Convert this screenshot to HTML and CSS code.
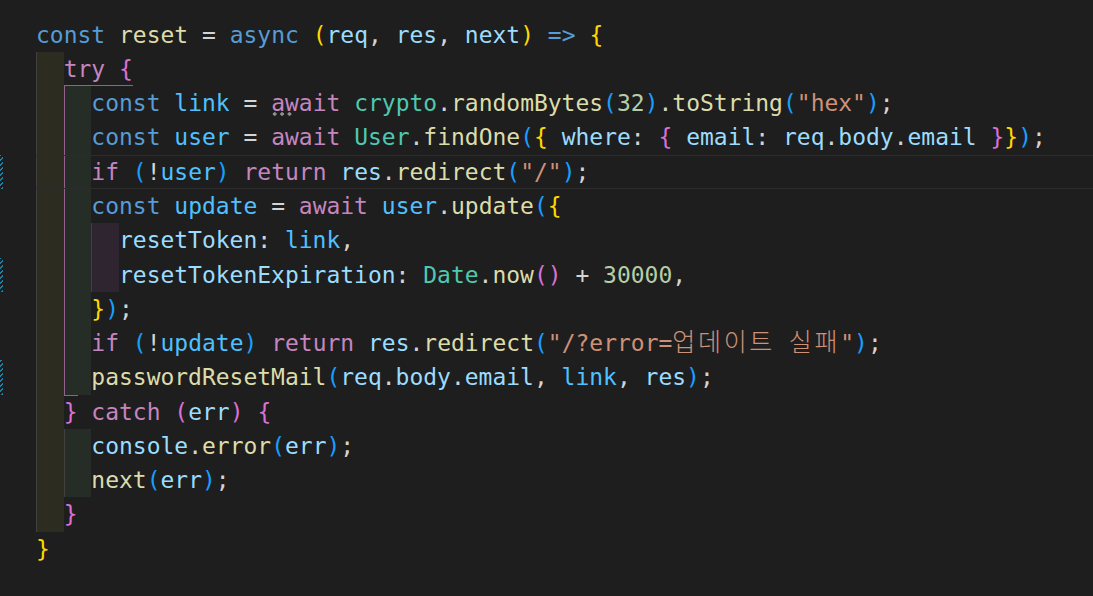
FILE: index.html
```html
<!DOCTYPE html>
<html lang="ko">
<head>
<meta charset="utf-8">
<title>reset.js</title>
<link rel="stylesheet" href="styles.css">
</head>
<body>
<div class="editor">
  <div class="row"><div class="gut"></div><div class="body"><span class="code"><span class="k">const</span> <span class="f">reset</span> = <span class="k">async</span> <span class="b1">(</span><span class="v">req</span>, <span class="v">res</span>, <span class="v">next</span><span class="b1">)</span> <span class="k">=&gt;</span> <span class="b1">{</span></span></div></div>
  <div class="row"><div class="gut"></div><div class="body"><span class="ind i1"></span><span class="code open-guide"><span class="c">try</span> <span class="b2">{</span></span></div></div>
  <div class="row"><div class="gut"></div><div class="body"><span class="ind i1"></span><span class="ind i2 pg"></span><span class="code"><span class="k">const</span> <span class="cv">link</span> = <span class="c"><span class="hint">aw</span>ait</span> <span class="t">crypto</span>.<span class="f">randomBytes</span><span class="b3">(</span><span class="n">32</span><span class="b3">)</span>.<span class="f">toString</span><span class="b3">(</span><span class="s">"hex"</span><span class="b3">)</span>;</span></div></div>
  <div class="row"><div class="gut"></div><div class="body"><span class="ind i1"></span><span class="ind i2 pg"></span><span class="code"><span class="k">const</span> <span class="cv">user</span> = <span class="c">await</span> <span class="t">User</span>.<span class="f">findOne</span><span class="b3">(</span><span class="b1">{</span> <span class="v">where</span>: <span class="b2">{</span> <span class="v">email</span>: <span class="v">req</span>.<span class="v">body</span>.<span class="v">email</span> <span class="b2">}</span><span class="b1">}</span><span class="b3">)</span>;</span></div></div>
  <div class="row"><div class="gut mod"></div><div class="body current"><span class="ind i1"></span><span class="ind i2 pg"></span><span class="code"><span class="c">if</span> <span class="b3">(</span>!<span class="cv">user</span><span class="b3">)</span> <span class="c">return</span> <span class="v">res</span>.<span class="f">redirect</span><span class="b3">(</span><span class="s">"/"</span><span class="b3">)</span>;</span></div></div>
  <div class="row"><div class="gut"></div><div class="body"><span class="ind i1"></span><span class="ind i2 pg"></span><span class="code"><span class="k">const</span> <span class="cv">update</span> = <span class="c">await</span> <span class="cv">user</span>.<span class="f">update</span><span class="b3">(</span><span class="b1">{</span></span></div></div>
  <div class="row"><div class="gut"></div><div class="body"><span class="ind i1"></span><span class="ind i2 pg"></span><span class="ind i3"></span><span class="code"><span class="v">resetToken</span>: <span class="cv">link</span>,</span></div></div>
  <div class="row"><div class="gut mod"></div><div class="body"><span class="ind i1"></span><span class="ind i2 pg"></span><span class="ind i3"></span><span class="code"><span class="v">resetTokenExpiration</span>: <span class="t">Date</span>.<span class="f">now</span><span class="b2">()</span> + <span class="n">30000</span>,</span></div></div>
  <div class="row"><div class="gut"></div><div class="body"><span class="ind i1"></span><span class="ind i2 pg"></span><span class="code"><span class="b1">}</span><span class="b3">)</span>;</span></div></div>
  <div class="row"><div class="gut"></div><div class="body"><span class="ind i1"></span><span class="ind i2 pg"></span><span class="code"><span class="c">if</span> <span class="b3">(</span>!<span class="cv">update</span><span class="b3">)</span> <span class="c">return</span> <span class="v">res</span>.<span class="f">redirect</span><span class="b3">(</span><span class="s">"/?error=<span class="ko">업데이트</span> <span class="ko">실패</span>"</span><span class="b3">)</span>;</span></div></div>
  <div class="row"><div class="gut mod"></div><div class="body"><span class="ind i1"></span><span class="ind i2 pg"></span><span class="code"><span class="f">passwordResetMail</span><span class="b3">(</span><span class="v">req</span>.<span class="v">body</span>.<span class="v">email</span>, <span class="cv">link</span>, <span class="v">res</span><span class="b3">)</span>;</span></div></div>
  <div class="row"><div class="gut"></div><div class="body"><span class="ind i1"></span><span class="code"><span class="b2 close-guide">}</span> <span class="c">catch</span> <span class="b2">(</span><span class="v">err</span><span class="b2">)</span> <span class="b2">{</span></span></div></div>
  <div class="row"><div class="gut"></div><div class="body"><span class="ind i1"></span><span class="ind i2"></span><span class="code"><span class="v">console</span>.<span class="f">error</span><span class="b3">(</span><span class="v">err</span><span class="b3">)</span>;</span></div></div>
  <div class="row"><div class="gut"></div><div class="body"><span class="ind i1"></span><span class="ind i2"></span><span class="code"><span class="f">next</span><span class="b3">(</span><span class="v">err</span><span class="b3">)</span>;</span></div></div>
  <div class="row"><div class="gut"></div><div class="body"><span class="ind i1"></span><span class="code"><span class="b2">}</span></span></div></div>
  <div class="row"><div class="gut"></div><div class="body"><span class="code"><span class="b1">}</span></span></div></div>
</div>
</body>
</html>
```

FILE: styles.css
```css
html, body {
  margin: 0;
  padding: 0;
  background: #1e1e1e;
}

.editor {
  width: 1093px;
  height: 596px;
  box-sizing: border-box;
  padding-top: 17.7px;
  background: #1e1e1e;
  font-family: "DejaVu Sans Mono", "Noto Sans CJK KR", monospace;
  font-size: 22.98px;
  color: #d4d4d4;
  overflow: hidden;
}

.row {
  display: flex;
  height: 34.27px;
  line-height: 34.27px;
}

.gut {
  flex: none;
  width: 36px;
}

.gut.mod::before {
  content: "";
  display: block;
  width: 3px;
  height: 100%;
  background: repeating-linear-gradient(-45deg, #1b81a8 0 1.6px, transparent 1.6px 3.6px);
}

.body {
  flex: 1;
  display: flex;
  align-items: stretch;
  box-sizing: border-box;
}

.body.current {
  border-top: 1px solid #2c2c2c;
  border-bottom: 1px solid #2c2c2c;
  line-height: 32.27px;
}

.ind {
  flex: none;
  width: 27.67px;
  box-sizing: border-box;
  border-left: 1px solid #404040;
}

.i1 { background: #2d2c21; }
.i2 { background: #252d26; }
.i3 { background: #2e2530; }

.ind.pg { border-left-color: #93608f; }

.code {
  white-space: pre;
  flex: none;
}

.open-guide {
  box-sizing: border-box;
  border-bottom: 1px solid #93608f;
}

.close-guide {
  display: inline-block;
  vertical-align: top;
  box-sizing: border-box;
  border-top: 1px solid #93608f;
  line-height: 33.27px;
}

.hint {
  position: relative;
}

.hint::after {
  content: "";
  position: absolute;
  left: 0;
  bottom: 0.3px;
  width: 22px;
  height: 4px;
  background: radial-gradient(circle, #8f8f8f 1.5px, transparent 1.9px) 0 0 / 7.4px 4px repeat-x;
}

.ko {
  font-family: "Noto Sans CJK KR", "DejaVu Sans Mono", sans-serif;
  font-size: 25px;
  line-height: 1;
  letter-spacing: 2.67px;
  font-weight: 300;
}

.k { color: #569cd6; }
.c { color: #c586c0; }
.f { color: #dcdcaa; }
.v { color: #9cdcfe; }
.cv { color: #4fc1ff; }
.t { color: #4ec9b0; }
.s { color: #ce9178; }
.n { color: #b5cea8; }
.b1 { color: #ffd700; }
.b2 { color: #da70d6; }
.b3 { color: #179fff; }
```
